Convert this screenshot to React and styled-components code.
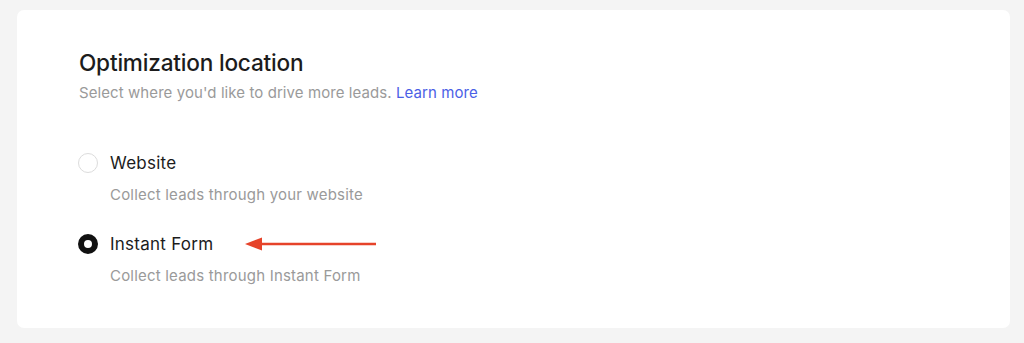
import React, { useState } from "react";
import styled, { createGlobalStyle } from "styled-components";

const GlobalStyle = createGlobalStyle`
  html, body {
    margin: 0;
    padding: 0;
    background: #f4f4f4;
    font-family: Inter, "Noto Sans", sans-serif;
    -webkit-font-smoothing: antialiased;
  }
`;

const Page = styled.div`
  width: 1024px;
  height: 343px;
  box-sizing: border-box;
  padding: 10px 14px 15px 17px;
`;

const Card = styled.section`
  background: #ffffff;
  border-radius: 7px;
  height: 100%;
  box-sizing: border-box;
  padding: 39px 62px 0;
`;

const Title = styled.h2`
  margin: 0;
  font-size: 22.6px;
  font-weight: 500;
  color: #1c1c1c;
  letter-spacing: -0.2px;
  line-height: 28px;
`;

const Subtitle = styled.p`
  margin: 6px 0 0;
  font-size: 15px;
  letter-spacing: 0.08px;
  color: #9a9a9a;
  line-height: 20px;

  a {
    color: #4b5fe6;
    text-decoration: none;
  }
`;

const Options = styled.div`
  margin-top: 49px;
  display: flex;
  flex-direction: column;
  gap: 28px;
`;

const Option = styled.label`
  display: grid;
  grid-template-columns: 20px auto;
  column-gap: 12px;
  row-gap: 11px;
  align-items: center;
  cursor: pointer;
  margin-left: -1px;
`;

const Radio = styled.span`
  width: 20px;
  height: 20px;
  box-sizing: border-box;
  border-radius: 50%;
  border: ${(p) => (p.checked ? "6px solid #111" : "1px solid #dcdcdc")};
  background: #fff;
`;

const LabelRow = styled.div`
  display: flex;
  align-items: center;
  gap: 32px;
`;

const Label = styled.span`
  font-size: 17px;
  letter-spacing: 0.25px;
  color: #1c1c1c;
  line-height: 22px;
`;

const Description = styled.span`
  grid-column: 2;
  font-size: 15px;
  letter-spacing: 0.2px;
  color: #9a9a9a;
  line-height: 20px;
`;

const Arrow = () => (
  <svg width="132" height="14" viewBox="0 0 132 14">
    <path d="M14 7 H131" stroke="#e6432a" strokeWidth="2.6" />
    <path d="M0 7 L17 0.5 L17 13.5 Z" fill="#e6432a" />
  </svg>
);

const options = [
  { id: "website", label: "Website", desc: "Collect leads through your website" },
  { id: "form", label: "Instant Form", desc: "Collect leads through Instant Form", arrow: true },
];

export default function App() {
  const [selected, setSelected] = useState("form");
  return (
    <>
      <GlobalStyle />
      <Page>
        <Card>
          <Title>Optimization location</Title>
          <Subtitle>
            Select where you'd like to drive more leads. <a href="#">Learn more</a>
          </Subtitle>
          <Options>
            {options.map((o) => (
              <Option key={o.id} onClick={() => setSelected(o.id)}>
                <Radio checked={selected === o.id} />
                <LabelRow>
                  <Label>{o.label}</Label>
                  {o.arrow && <Arrow />}
                </LabelRow>
                <Description>{o.desc}</Description>
              </Option>
            ))}
          </Options>
        </Card>
      </Page>
    </>
  );
}
